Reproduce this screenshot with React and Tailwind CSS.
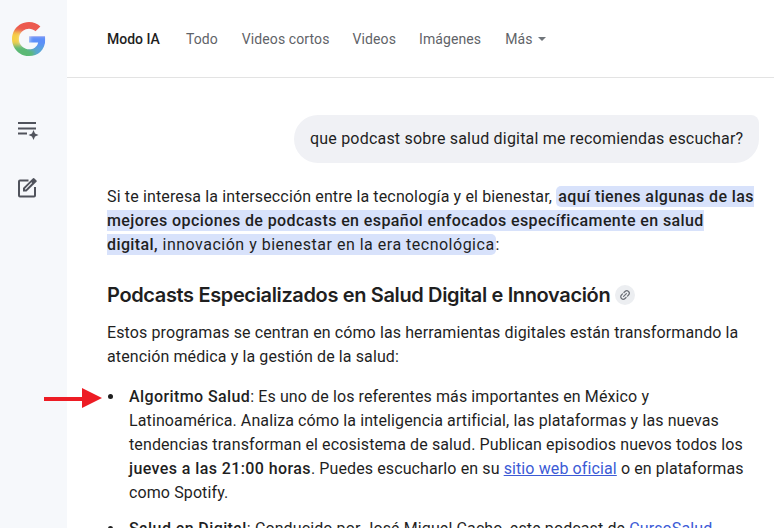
import React from "react";

const G = () => (
  <svg width="34" height="34" viewBox="0 0 48 48" className="block">
    <defs>
      <clipPath id="gclip">
        <path d="M24 9.5c3.54 0 6.71 1.22 9.21 3.6l6.85-6.85C35.9 2.38 30.47 0 24 0 14.62 0 6.51 5.38 2.56 13.22l7.98 6.19C12.43 13.72 17.74 9.5 24 9.5z" />
        <path d="M46.98 24.55c0-1.57-.15-3.09-.38-4.55H24v9.02h12.94c-.58 2.96-2.26 5.48-4.78 7.18l7.73 6c4.51-4.18 7.09-10.36 7.09-17.65z" />
        <path d="M10.53 28.59c-.48-1.45-.76-2.99-.76-4.59s.27-3.14.76-4.59l-7.98-6.19C.92 16.46 0 20.12 0 24c0 3.88.92 7.54 2.56 10.78l7.97-6.19z" />
        <path d="M24 48c6.48 0 11.93-2.13 15.89-5.81l-7.73-6c-2.15 1.45-4.92 2.3-8.16 2.3-6.26 0-11.57-4.22-13.47-9.91l-7.98 6.19C6.51 42.62 14.62 48 24 48z" />
      </clipPath>
      <filter id="gblur" x="-30%" y="-30%" width="160%" height="160%">
        <feGaussianBlur stdDeviation="3" />
      </filter>
    </defs>
    <g clipPath="url(#gclip)">
      <g filter="url(#gblur)">
        <rect x="-6" y="-6" width="60" height="22" fill="#ec5a4f" />
        <rect x="-6" y="14" width="18" height="20" fill="#f6d047" />
        <rect x="-6" y="32" width="40" height="22" fill="#5bb974" />
        <rect x="24" y="18" width="30" height="20" fill="#5b8ff9" />
        <rect x="32" y="34" width="22" height="20" fill="#5aa5d8" />
      </g>
    </g>
  </svg>
);

const NewChatList = () => (
  <svg width="24" height="24" viewBox="0 0 24 24" fill="#50535c" className="block">
    <rect x="3" y="5" width="18" height="2" />
    <rect x="3" y="10.5" width="18" height="2" />
    <rect x="3" y="15.500" width="9" height="2" />
    <path d="M18.5 13 L20 16.500 L23.500 18 L20 19.500 L18.500 23 L17 19.500 L13.500 18 L17 16.500 Z" />
  </svg>
);

const EditIcon = () => (
  <svg width="24" height="24" viewBox="0 0 24 24" className="block">
    <path d="M13.5 4.500H5a1 1 0 0 0-1 1v14a1 1 0 0 0 1 1h14a1 1 0 0 0 1-1v-8.500" fill="none" stroke="#50535c" strokeWidth="2" />
    <path d="M8 15.500v-3.500L18 2.200q.6-.5 1.200 0l2.300 2.300q.5.6 0 1.200L11.500 15.500z" fill="#50535c" />
    <path d="M10 13.500v-.8l6.400-6.400.8.8-6.400 6.400z" fill="#f6f8fb" />
  </svg>
);

const LinkIcon = () => (
  <svg width="12" height="12" viewBox="0 0 24 24" fill="none" stroke="#6b6f76" strokeWidth="2.4" strokeLinecap="round" className="block -rotate-45">
    <path d="M10 7H7a5 5 0 0 0 0 10h3" />
    <path d="M14 7h3a5 5 0 0 1 0 10h-3" />
    <path d="M8 12h8" />
  </svg>
);

const Arrow = () => (
  <svg width="60" height="22" viewBox="0 0 60 22" className="absolute left-[43px] top-[387px]">
    <path d="M1 10h38V1l20 10-20 10v-7H1z" fill="#ed1c24" />
  </svg>
);

const Bullet = () => <span className="mt-[9px] ml-[1px] h-[5px] w-[5px] shrink-0 rounded-full bg-[#1f1f1f]"></span>;

const B = ({ children }) => <strong className="font-medium tracking-[0.4px]">{children}</strong>;

export default function App() {
  return (
    <div className="relative flex h-[528px] w-[774px] overflow-hidden bg-white text-[16px] leading-6 tracking-[0.11px] text-[#1f1f1f]" style={{ fontFamily: "Roboto, sans-serif" }}>
      <aside className="flex w-[67px] shrink-0 flex-col bg-[#f6f8fb]">
        <div className="ml-[12px] mt-[22px]"><G /></div>
        <div className="ml-[15px] mt-[61px]"><NewChatList /></div>
        <div className="ml-[15px] mt-[35px]"><EditIcon /></div>
      </aside>

      <main className="min-w-0 flex-1">
        <nav className="flex h-[78px] items-center border-b border-[#e3e3e3] pl-[40px] text-[14px] tracking-[0.1px] text-[#5f6368]">
          <span className="mr-[26px] font-medium tracking-normal text-[#1f1f1f]">Modo IA</span>
          <span className="mr-[24px]">Todo</span>
          <span className="mr-[23px]">Videos cortos</span>
          <span className="mr-[23px]">Videos</span>
          <span className="mr-[24px]">Imágenes</span>
          <span>Más</span>
          <span className="ml-[5px] h-0 w-0 border-x-[4px] border-t-[4px] border-x-transparent border-t-[#70757a]"></span>
        </nav>

        <div className="pl-[40px] pr-[15px]">
          <div className="mt-[37px] flex justify-end">
            <div className="flex h-[48px] w-[465px] items-center rounded-[24px] rounded-tr-[8px] bg-[#f0f1f5] pl-[16px] tracking-[0.2px]">
              que podcast sobre salud digital me recomiendas escuchar?
            </div>
          </div>

          <p className="mt-[22px] tracking-[0.14px]">
            Si te interesa la intersección entre la tecnología y el bienestar,{" "}
            <span className="rounded-[5px] bg-[#d8e2fb] py-px pl-[2px] pr-px tracking-[0.5px]">
              <span className="font-medium tracking-[0.4px]">aquí tienes algunas de las mejores opciones de podcasts en español enfocados específicamente en salud digital,</span> innovación y bienestar en la era tecnológica
            </span>:
          </p>

          <h2 className="mt-[24px] flex h-[28px] items-center text-[20px] font-[560] tracking-[-0.36px]" style={{ fontFamily: "Inter, sans-serif" }}>
            Podcasts Especializados en Salud Digital e Innovación
            <span className="ml-[5px] flex h-[20px] w-[20px] items-center justify-center rounded-full bg-[#eceef1]"><LinkIcon /></span>
          </h2>

          <p className="mt-[12px]">
            Estos programas se centran en cómo las herramientas digitales están transformando la atención médica y la gestión de la salud:
          </p>

          <ul className="mt-[16px] space-y-[12px]">
            <li className="flex">
              <Bullet />
              <div className="ml-[16px]">
                <B>Algoritmo Salud</B>: Es uno de los referentes más importantes en México y Latinoamérica. Analiza cómo la inteligencia artificial, las plataformas y las nuevas tendencias transforman el ecosistema de salud. Publican episodios nuevos todos los{" "}
                <B>jueves a las 21:00 horas</B>. Puedes escucharlo en su{" "}
                <a className="text-[#3c5bd6] underline">sitio web oficial</a> o en plataformas como Spotify.
              </div>
            </li>
            <li className="flex">
              <Bullet />
              <div className="ml-[16px]">
                <B>Salud en Digital</B>: Conducido por José Miguel Cacho, este podcast de{" "}
                <a className="text-[#3c5bd6] underline">CursoSalud</a>
              </div>
            </li>
          </ul>
        </div>
      </main>

      <Arrow />
    </div>
  );
}
